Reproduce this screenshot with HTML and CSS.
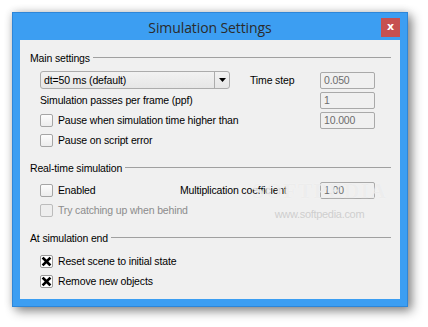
FILE: index.html
```html
<!DOCTYPE html>
<html>
<head>
<meta charset="utf-8">
<title>Simulation Settings</title>
<link rel="stylesheet" href="styles.css">
</head>
<body>
<div class="window">
  <div class="titlebar">
    <span></span>
    <span class="title">Simulation Settings</span>
    <span class="close">x</span>
  </div>
  <div class="client">
    <div class="group">
      <div class="heading">Main settings</div>
      <div class="row">
        <div class="combo"><span class="combo-text">dt=50 ms (default)</span><span class="combo-btn"><svg width="7" height="4" viewBox="0 0 7 4"><polygon points="0,0 7,0 3.5,4" fill="#000"/></svg></span></div>
        <span class="label ts">Time step</span>
        <span class="input">0.050</span>
      </div>
      <div class="row">
        <span class="label">Simulation passes per frame (ppf)</span>
        <span class="input">1</span>
      </div>
      <div class="row">
        <span class="check"></span><span class="label">Pause when simulation time higher than</span>
        <span class="input">10.000</span>
      </div>
      <div class="row">
        <span class="check"></span><span class="label">Pause on script error</span>
      </div>
    </div>
    <div class="group">
      <div class="heading">Real-time simulation</div>
      <div class="row">
        <div class="cell-left"><span class="check"></span><span class="label">Enabled</span></div>
        <span class="label">Multiplication coefficient</span>
        <span class="input">1.00</span>
      </div>
      <div class="row">
        <span class="check disabled"></span><span class="label disabled-text">Try catching up when behind</span>
      </div>
    </div>
    <div class="group last">
      <div class="heading">At simulation end</div>
      <div class="row">
        <span class="check checked"><svg width="11" height="11" viewBox="0 0 11 11"><path d="M2.5 2.5 L8.5 8.5 M8.5 2.5 L2.5 8.5" stroke="#000" stroke-width="2.6" stroke-linecap="square"/></svg></span><span class="label">Reset scene to initial state</span>
      </div>
      <div class="row">
        <span class="check checked"><svg width="11" height="11" viewBox="0 0 11 11"><path d="M2.5 2.5 L8.5 8.5 M8.5 2.5 L2.5 8.5" stroke="#000" stroke-width="2.6" stroke-linecap="square"/></svg></span><span class="label">Remove new objects</span>
      </div>
    </div>
    <div class="watermark"><span class="wm-big">SOFTPEDIA</span><span class="wm-small">www.softpedia.com</span></div>
  </div>
</div>
</body>
</html>
```

FILE: styles.css
```css
html, body {
  margin: 0;
  padding: 0;
  background: #ffffff;
}
body {
  width: 428px;
  height: 327px;
  overflow: hidden;
  font-family: "Liberation Sans", Arial, sans-serif;
  font-size: 10.5px;
  letter-spacing: -0.15px;
  color: #000;
}
.window {
  margin: 12px 0 0 12px;
  width: 396px;
  height: 295px;
  box-sizing: border-box;
  background: #3c9ef2;
  border: 1px solid #2e86d8;
  padding: 0 7px 7px 7px;
  display: flex;
  flex-direction: column;
  box-shadow: 4px 4px 10px rgba(0,0,0,0.45), 0 0 8px rgba(0,0,0,0.15);
}
.titlebar {
  height: 30px;
  display: grid;
  grid-template-columns: 1fr auto 1fr;
  align-items: start;
}
.title {
  font-family: "Open Sans", "Noto Sans", sans-serif;
  font-size: 14px;
  letter-spacing: -0.1px;
  color: #2b2b2b;
  line-height: 20px;
  margin-top: 5px;
}
.close {
  justify-self: end;
  margin-top: 5px;
  width: 19px;
  height: 19px;
  background: #c75050;
  color: #fff;
  font-family: "DejaVu Sans", sans-serif;
  font-weight: bold;
  font-size: 11px;
  letter-spacing: 0;
  line-height: 17px;
  text-align: center;
}
.client {
  flex: 1;
  background: #f0f0f0;
  padding: 8px 9px 0 10px;
  position: relative;
}
.group {
  margin-bottom: 8px;
}
.heading {
  height: 20px;
  display: flex;
  align-items: center;
  margin-bottom: 2px;
}
.group.last .heading {
  margin-bottom: 3px;
}
.heading::after {
  content: "";
  flex: 1;
  height: 1px;
  background: #a0a0a0;
  margin-left: 3px;
  margin-top: -1px;
}
.row {
  height: 20px;
  display: flex;
  align-items: center;
  padding: 0 16px 0 10px;
}
.label {
  white-space: nowrap;
}
.ts {
  margin-left: 20px;
}
.input {
  margin-left: auto;
  width: 55px;
  height: 17px;
  box-sizing: border-box;
  border: 1px solid #a9a9a9;
  border-radius: 2px;
  color: #6d6d6d;
  padding-left: 3px;
  line-height: 15px;
  background: #f0f0f0;
}
.combo {
  width: 190px;
  height: 18px;
  box-sizing: border-box;
  border: 1px solid #acacac;
  border-radius: 3px;
  background: linear-gradient(#f2f2f2, #e6e6e6);
  display: flex;
}
.combo-text {
  flex: 1;
  padding-left: 3px;
  line-height: 16px;
}
.combo-btn {
  width: 14px;
  border-left: 1px solid #acacac;
  display: flex;
  align-items: center;
  justify-content: center;
}
.check {
  width: 13px;
  height: 13px;
  box-sizing: border-box;
  border: 1px solid #a5a5a5;
  border-radius: 2px;
  background: linear-gradient(#fdfdfd, #ececec);
  margin-right: 5px;
  display: flex;
  align-items: center;
  justify-content: center;
  flex: none;
}
.check.disabled {
  border-color: #bcbcbc;
  background: #eeeeee;
}
.check.checked {
  background: #ffffff;
  border-color: #9a9a9a;
}
.disabled-text {
  color: #8c8c8c;
}
.cell-left {
  width: 140px;
  display: flex;
  align-items: center;
}
.watermark {
  position: absolute;
  left: 232px;
  top: 138px;
  display: flex;
  flex-direction: column;
  align-items: center;
  pointer-events: none;
}
.wm-big {
  font-family: "Liberation Serif", serif;
  font-weight: bold;
  font-size: 22px;
  letter-spacing: 1px;
  color: rgba(225,225,225,0.55);
  text-shadow: 0 0 1px rgba(255,255,255,0.8);
}
.wm-small {
  font-family: "Liberation Sans", sans-serif;
  font-size: 11px;
  color: rgba(195,195,195,0.75);
  margin-top: 4px;
  letter-spacing: -0.3px;
}
```
